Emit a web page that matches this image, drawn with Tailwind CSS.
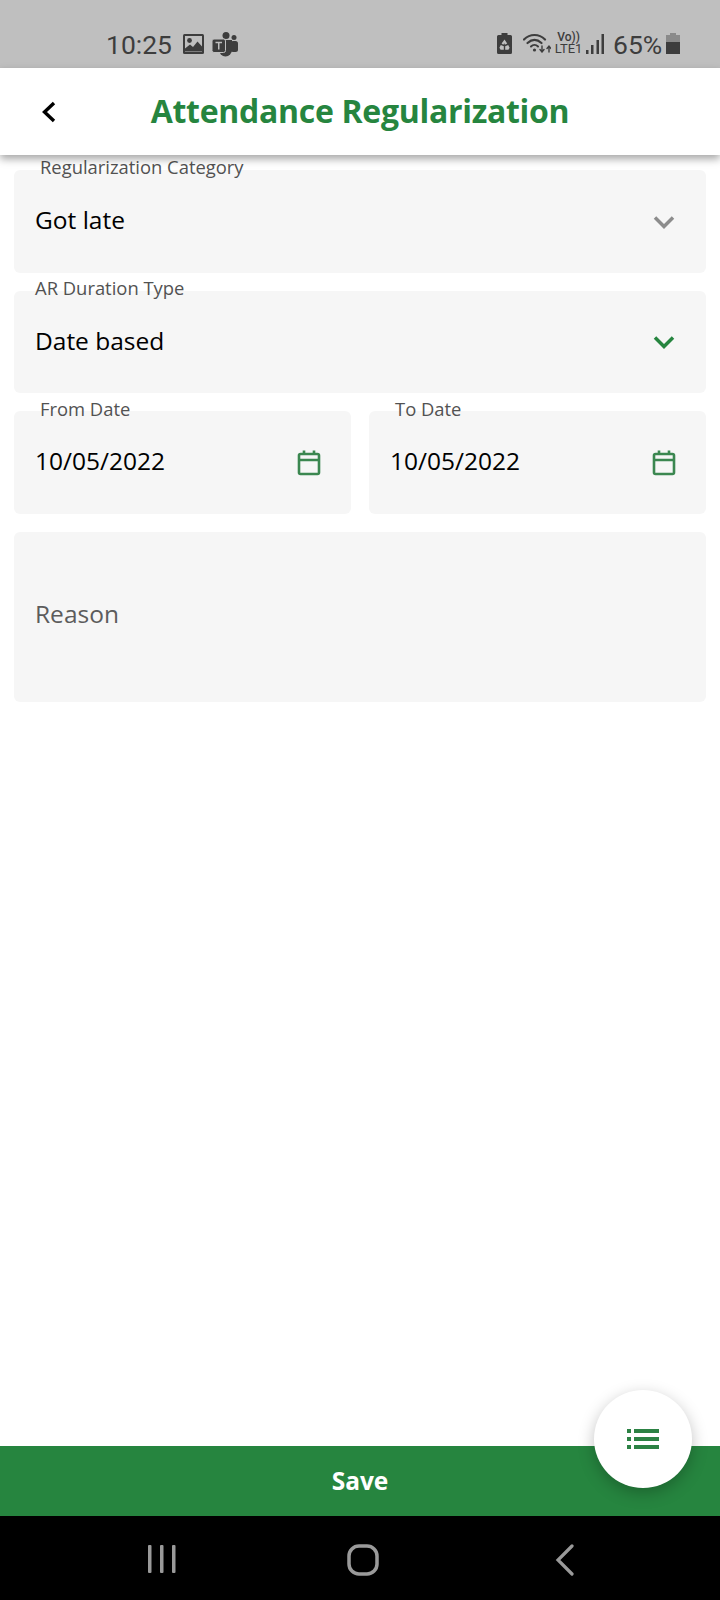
<!DOCTYPE html>
<html lang="en">
<head>
  <meta charset="UTF-8" />
  <meta name="viewport" content="width=device-width, initial-scale=1.0"/>
  <title>Attendance Regularization</title>
  <script src="https://cdn.jsdelivr.net/npm/@tailwindcss/browser@4"></script>
</head>
<body class="bg-white">
<div class="relative w-[720px] h-[1600px] flex flex-col overflow-hidden bg-white font-['Open_Sans',sans-serif]">

  <!-- Status bar -->
  <div class="h-[68px] shrink-0 bg-[#bfbfbf] flex items-start pt-[29px] pl-[106px] text-[#3d3d3d] font-['Roboto',sans-serif]">
    <span class="w-[67px] text-[26.500px] leading-[32px] whitespace-nowrap">10:25</span>
    <svg class="ml-[10px] mt-[5px]" width="21" height="20" viewBox="0 0 21 20">
      <rect width="21" height="20" rx="1.500" fill="#3d3d3d"/>
      <rect x="2" y="2" width="17" height="16" fill="#bfbfbf"/>
      <circle cx="6.500" cy="6.500" r="2.400" fill="#3d3d3d"/>
      <path d="M2 17.500 V14.500 L7 10.500 L10 13 L14.500 7.500 L19 12.500 V17.500 Z" fill="#3d3d3d"/>
    </svg>
    <svg class="ml-[8px] mt-[3px]" width="26" height="25" viewBox="0 0 26 25" fill="#3d3d3d">
      <circle cx="14" cy="3.500" r="3.500"/>
      <circle cx="22" cy="5.500" r="2.500"/>
      <rect x="18.500" y="9" width="7.500" height="11" rx="2.500"/>
      <path d="M7 8 H20 V18 A6.500 6.500 0 0 1 7 18 Z"/>
      <rect x="0" y="7" width="13.500" height="13.500" rx="2" stroke="#bfbfbf" stroke-width="1"/>
      <path d="M3.500 10.500 H10 M6.750 10.500 V17.500" stroke="#bfbfbf" stroke-width="1.500"/>
    </svg>
    <div class="flex-1"></div>
    <svg class="mt-[4px]" width="15" height="21" viewBox="0 0 15 21" fill="#3d3d3d">
      <path d="M4.500 0 H10.500 V2 H13.500 A1.500 1.500 0 0 1 15 3.500 V19.500 A1.500 1.500 0 0 1 13.500 21 H1.500 A1.500 1.500 0 0 1 0 19.500 V3.500 A1.500 1.500 0 0 1 1.500 2 H4.500 Z"/>
      <path d="M7.500 6.500 L10.200 10.500 L7.900 11.700 L7.300 10.200 L6.300 11.700 L4.600 10.600 Z M3.800 12 L6.800 13.200 L6.800 16.800 H3.600 L2.400 14.700 Z M11.200 12 L12.600 14.700 L11.400 16.800 H8.200 L8.200 13.200 Z" fill="#bfbfbf"/>
    </svg>
    <svg class="ml-[11px] mt-[4px]" width="28" height="20" viewBox="0 0 28 20" fill="none" stroke="#3d3d3d" stroke-linecap="round">
      <path d="M1 6.500 C7 0.500 16 0.500 22 6.500" stroke-width="2.200"/>
      <path d="M4.500 10 C9 6 14 6 18.500 10" stroke-width="2.200"/>
      <path d="M8 13.500 C10 11.500 13 11.500 15 13.500" stroke-width="2"/>
      <circle cx="11.500" cy="17" r="1.600" fill="#3d3d3d" stroke="none"/>
      <path d="M19 13 V18.500 M17 16.500 L19 19 L21 16.500 M26 19 V13.500 M24 15.500 L26 13 L28 15.500" stroke-width="1.400"/>
    </svg>
    <div class="w-[27px] ml-[4px] mt-[3px] flex flex-col items-center text-[#3d3d3d]">
      <span class="text-[12px] leading-[11px] font-medium">Vo))</span>
      <span class="text-[13px] leading-[12px]">LTE1</span>
    </div>
    <svg class="ml-[4px] mt-[5px]" width="18" height="20" viewBox="0 0 18 20" fill="#3d3d3d">
      <rect x="0" y="16" width="2.500" height="4"/>
      <rect x="5" y="11" width="2.500" height="9"/>
      <rect x="10.500" y="6" width="2.500" height="14"/>
      <rect x="15.500" y="0" width="2.500" height="20"/>
    </svg>
    <span class="ml-[9px] w-[49px] text-[26.500px] leading-[32px] whitespace-nowrap">65%</span>
    <svg class="ml-[4px] mr-[40px] mt-[4px]" width="14" height="21" viewBox="0 0 14 21">
      <path d="M4 0 H10 V2 H14 V9 H0 V2 H4 Z" fill="#8a8a8a"/>
      <rect y="9" width="14" height="12" fill="#3d3d3d"/>
    </svg>
  </div>

  <!-- Header -->
  <div class="relative z-10 h-[87px] shrink-0 bg-white flex items-center justify-center shadow-[0_4px_8px_rgba(0,0,0,0.35)]">
    <svg class="absolute left-[41px] top-[33px]" width="16" height="22" viewBox="0 0 16 22" fill="none" stroke="#000" stroke-width="3.400">
      <path d="M13 2 L3.500 11 L13 20"/>
    </svg>
    <h1 class="text-[32px] leading-[40px] font-bold text-[#26853f] mt-[-2px] tracking-[-0.3px] whitespace-nowrap">Attendance Regularization</h1>
  </div>

  <!-- Form -->
  <div class="flex-1 flex flex-col gap-[18px] pt-[15px] px-[14px]">
    <div class="relative h-[103px] bg-[#f6f6f6] rounded-[6px] flex items-center pl-[21px] pr-[31px] pb-[4px]">
      <span class="absolute left-[26px] top-[-15px] text-[18.400px] leading-[24px] text-[#525252] whitespace-nowrap">Regularization Category</span>
      <span class="flex-1 text-[24.500px] leading-[32px] text-black">Got late</span>
      <svg class="mt-[4px]" width="22" height="14" viewBox="0 0 22 14" fill="none" stroke="#8c8c8c" stroke-width="3.500"><path d="M2 2.500 L11 11.500 L20 2.500"/></svg>
    </div>

    <div class="relative h-[102px] bg-[#f6f6f6] rounded-[6px] flex items-center pl-[21px] pr-[31px] pb-[2px]">
      <span class="absolute left-[21px] top-[-15px] text-[18.400px] leading-[24px] text-[#525252] whitespace-nowrap">AR Duration Type</span>
      <span class="flex-1 text-[24.500px] leading-[32px] text-black">Date based</span>
      <svg class="mt-[2px]" width="22" height="14" viewBox="0 0 22 14" fill="none" stroke="#26853f" stroke-width="3.500"><path d="M2 2.500 L11 11.500 L20 2.500"/></svg>
    </div>

    <div class="flex gap-[18px]">
      <div class="relative flex-1 h-[103px] bg-[#f6f6f6] rounded-[6px] flex items-center pl-[21px] pr-[30px] pb-[4px]">
        <span class="absolute left-[26px] top-[-14px] text-[18.400px] leading-[24px] text-[#525252] whitespace-nowrap">From Date</span>
        <span class="flex-1 text-[24.500px] leading-[32px] text-black">10/05/2022</span>
        <svg class="mt-[4px]" width="24" height="26" viewBox="0 0 24 26" fill="none" stroke="#3b8750" stroke-width="2.600">
          <rect x="2" y="4" width="20" height="20" rx="1.500"/>
          <path d="M2 10 H22 M7 0.500 V4 M17 0.500 V4"/>
        </svg>
      </div>
      <div class="relative flex-1 h-[103px] bg-[#f6f6f6] rounded-[6px] flex items-center pl-[21px] pr-[30px] pb-[4px]">
        <span class="absolute left-[26px] top-[-14px] text-[18.400px] leading-[24px] text-[#525252] whitespace-nowrap">To Date</span>
        <span class="flex-1 text-[24.500px] leading-[32px] text-black">10/05/2022</span>
        <svg class="mt-[4px]" width="24" height="26" viewBox="0 0 24 26" fill="none" stroke="#3b8750" stroke-width="2.600">
          <rect x="2" y="4" width="20" height="20" rx="1.500"/>
          <path d="M2 10 H22 M7 0.500 V4 M17 0.500 V4"/>
        </svg>
      </div>
    </div>

    <div class="h-[170px] bg-[#f6f6f6] rounded-[6px] flex items-center pl-[21px] pb-[6px]">
      <span class="text-[24.500px] leading-[32px] text-[#5c5c5c]">Reason</span>
    </div>
  </div>

  <!-- Save -->
  <div class="h-[70px] shrink-0 bg-[#26853f] flex items-center justify-center">
    <span class="text-[24.500px] leading-[32px] font-bold text-white">Save</span>
  </div>

  <!-- Nav bar -->
  <div class="h-[84px] shrink-0 bg-black flex items-start pt-[28px]">
    <svg class="ml-[148px]" width="28" height="30" viewBox="0 0 28 30" fill="#9a9a9a">
      <rect x="0" y="1" width="3.500" height="28" rx="1"/>
      <rect x="12" y="1" width="3.500" height="28" rx="1"/>
      <rect x="24" y="1" width="3.500" height="28" rx="1"/>
    </svg>
    <svg class="ml-[171px]" width="32" height="32" viewBox="0 0 32 32" fill="none" stroke="#9a9a9a" stroke-width="3.500">
      <rect x="2" y="2" width="28" height="28" rx="10"/>
    </svg>
    <svg class="ml-[176px]" width="20" height="32" viewBox="0 0 20 32" fill="none" stroke="#9a9a9a" stroke-width="3.200" stroke-linecap="round">
      <path d="M17 2 L3 16 L17 30"/>
    </svg>
  </div>

  <!-- FAB -->
  <div class="absolute left-[594px] top-[1390px] w-[98px] h-[98px] rounded-full bg-white flex items-center justify-center shadow-[0_5px_16px_rgba(0,0,0,0.25)]">
    <svg width="32" height="20" viewBox="0 0 32 20" fill="#2c8244">
      <rect x="0" y="0" width="4" height="4"/>
      <rect x="7" y="0" width="25" height="4"/>
      <rect x="0" y="8" width="4" height="4"/>
      <rect x="7" y="8" width="25" height="4"/>
      <rect x="0" y="16" width="4" height="4"/>
      <rect x="7" y="16" width="25" height="4"/>
    </svg>
  </div>
</div>
</body>
</html>
